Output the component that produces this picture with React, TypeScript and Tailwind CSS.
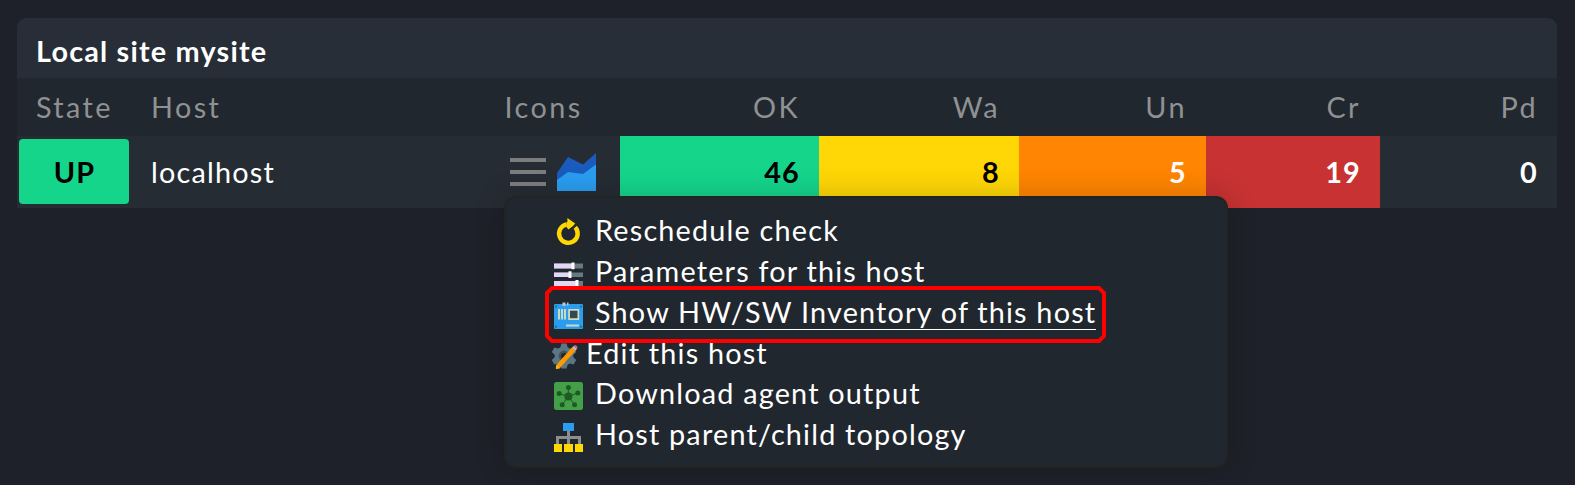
import React from "react";

type IconProps = { className?: string };

function MenuIcon() {
  return (
    <svg width="36" height="28" viewBox="0 0 36 28" className="block" fill="#7b7d7f">
      <rect x="0" y="0" width="36" height="4" />
      <rect x="0" y="12" width="36" height="4" />
      <rect x="0" y="24" width="36" height="4" />
    </svg>
  );
}

function GraphIcon() {
  return (
    <svg width="39" height="38" viewBox="0 0 39 38" className="block">
      <path d="M0 20L11 4L26 11.5L39 0V20L26 30H0Z" fill="#1a5bbd" />
      <path d="M0 27L11 19L26 21L39 11.5V38H0Z" fill="#2a9df0" />
    </svg>
  );
}

function RescheduleIcon({ className }: IconProps) {
  return (
    <svg width="30" height="30" viewBox="0 0 30 30" className={className}>
      <path d="M22.2 9.2A9.3 9.3 0 1 1 13.6 6.4" fill="none" stroke="#ffd703" strokeWidth="4.4" />
      <path d="M14.4 0L22.2 5.4L20 8L15.4 11.4L13.4 9V4.2L14.4 3.8Z" fill="#ffd703" />
    </svg>
  );
}

function ParametersIcon({ className }: IconProps) {
  return (
    <svg width="30" height="30" viewBox="0 0 30 30" className={className}>
      <path d="M1 4.5H30V9.5H1ZM1 13.5H30V18H1ZM1 22H30V27H1Z" fill="#677983" />
      <path d="M1 4.5H19V9.5H1ZM1 13.5H16V18H1ZM1 22H23V27H1Z" fill="#e3d7f5" />
      <path d="M18.5 3.5H21.5V10.3H18.5ZM15.5 12.3H18.5V19H15.5ZM22.5 21H25.5V28H22.5Z" fill="#fff" />
    </svg>
  );
}

function InventoryIcon({ className }: IconProps) {
  return (
    <svg width="30" height="30" viewBox="0 0 30 30" className={className}>
      <rect x="1" y="4" width="29" height="25" rx="1" fill="#2a9df0" />
      <path d="M9.5 2.5H12.5V6H9.5ZM14 2.5H15.5V5.5H14Z" fill="#b9c6cb" />
      <path d="M5 9H7V19.5H5ZM8 9H10V19.5H8ZM11 9H13V19.5H11Z" fill="#c9dac0" />
      <rect x="15.2" y="9" width="11" height="11" fill="#cfdabf" />
      <rect x="17" y="10.7" width="7.5" height="7.5" fill="#37474f" />
      <rect x="13" y="24.5" width="13" height="2" fill="#c9dac0" />
      <path d="M2 5.5h2v2H2zM27 5.5h2v2h-2zM2 25.8h2v2H2zM27 25.8h2v2h-2z" fill="#17806f" />
    </svg>
  );
}

function EditIcon({ className }: IconProps) {
  return (
    <svg width="30" height="30" viewBox="0 0 30 30" className={className}>
      <g fill="#5b7685" transform="translate(13 15)">
        <circle r="9.4" />
        <g transform="rotate(0)">
          <path d="M-3.8-8L-2.6-12.6H2.6L3.8-8ZM-3.8 8L-2.6 12.6H2.6L3.8 8Z" />
        </g>
        <g transform="rotate(60)">
          <path d="M-3.8-8L-2.6-12.6H2.6L3.8-8ZM-3.8 8L-2.6 12.6H2.6L3.8 8Z" />
        </g>
        <g transform="rotate(120)">
          <path d="M-3.8-8L-2.6-12.6H2.6L3.8-8ZM-3.8 8L-2.6 12.6H2.6L3.8 8Z" />
        </g>
        <circle r="5.4" fill="#40525d" />
        <circle r="3" fill="#21272e" />
      </g>
      <path d="M5.2 24L21 6.6L24.4 9.8L8.8 27.2L5.2 28Z" fill="#fe9803" />
      <path d="M5.2 24L8.8 27.2L4.8 28Z" fill="#e0c12c" />
      <path d="M21 6.6L22.6 4.9L26 8L24.4 9.8Z" fill="#b8c2c8" />
      <path d="M22.6 4.9C24 3 27.8 5.6 26 8Z" fill="#ee6a72" />
    </svg>
  );
}

function AgentIcon({ className }: IconProps) {
  return (
    <svg width="30" height="30" viewBox="0 0 30 30" className={className}>
      <rect x="1" y="1" width="29" height="28" rx="2.5" fill="#44a048" />
      <g stroke="#1f5a24" strokeWidth="1">
        <path d="M15.3 15.5V6.5M15.3 15.5L6.3 12.5M15.3 15.5L24.7 12M15.3 15.5L9 23.8M15.3 15.5L21.8 23.8" />
      </g>
      <g fill="#1f5a24">
        <circle cx="15.4" cy="15.6" r="4" />
        <circle cx="15.4" cy="6.4" r="2.5" />
        <circle cx="6.2" cy="12.6" r="2.5" />
        <circle cx="24.8" cy="12" r="2.5" />
        <circle cx="9.2" cy="23.8" r="2.5" />
        <circle cx="21.6" cy="23.8" r="2.5" />
      </g>
    </svg>
  );
}

function TopologyIcon({ className }: IconProps) {
  return (
    <svg width="30" height="30" viewBox="0 0 30 30" className={className}>
      <path d="M4.5 22V15.5H26.5V22M15.5 8V22" fill="none" stroke="#8b8d8f" strokeWidth="3" />
      <rect x="10" y="1" width="11" height="8" fill="#2a9df0" />
      <path d="M1 22H9V30H1ZM11 22H20V30H11ZM22 22H30V30H22Z" fill="#ffd703" />
    </svg>
  );
}

const counts = [
  { label: "OK", value: 46, width: "w-[199px]", colors: "bg-[#15d58b] text-black" },
  { label: "Wa", value: 8, width: "w-[200px]", colors: "bg-[#ffd706] text-black" },
  { label: "Un", value: 5, width: "w-[187px]", colors: "bg-[#ff8502] text-white" },
  { label: "Cr", value: 19, width: "w-[174px]", colors: "bg-[#c83232] text-white" },
  { label: "Pd", value: 0, width: "w-[177px]", colors: "text-white" },
];

const menuItems = [
  { label: "Reschedule check", Icon: RescheduleIcon },
  { label: "Parameters for this host", Icon: ParametersIcon },
  { label: "Show HW/SW Inventory of this host", Icon: InventoryIcon, active: true },
  { label: "Edit this host", Icon: EditIcon, tight: true },
  { label: "Download agent output", Icon: AgentIcon },
  { label: "Host parent/child topology", Icon: TopologyIcon },
];

function HostMenu() {
  return (
    <div className="absolute left-[504px] top-[196px] h-[272px] w-[724px] rounded-[12px] border-2 border-[#222423] bg-[#21272e] pl-[47px] pt-[11.6px] shadow-[0_0_30px_rgba(0,0,0,0.2)]">
      {menuItems.map(({ label, Icon, active, tight }) => (
        <div
          key={label}
          className={
            tight
              ? "flex h-[40.8px] items-center gap-[5px] -ml-[2px]"
              : "flex h-[40.8px] items-center gap-[12px]"
          }
        >
          <Icon className="mt-[6.6px] block shrink-0" />
          <span
            className={
              active
                ? "-mb-[3px] border-b border-white leading-[33px]"
                : tight
                  ? "pt-[1px] leading-[36px]"
                  : "leading-[36px]"
            }
          >
            {label}
          </span>
        </div>
      ))}
      <svg
        width="561"
        height="57"
        viewBox="0 0 561 57"
        className="pointer-events-none absolute left-[39px] top-[88px]"
      >
        <path
          d="M7 2H554L559 7V50L554 55H7L2 50V7Z"
          fill="none"
          stroke="#fe0000"
          strokeWidth="4"
        />
      </svg>
    </div>
  );
}

export default function App() {
  return (
    <div className="relative h-[485px] w-[1575px] overflow-hidden whitespace-nowrap bg-[#1e2129] pl-[17px] pt-[18px] font-['Lato',sans-serif] text-[28.8px] tracking-[1.2px] text-white">
      <div className="w-[1540px] overflow-hidden rounded-t-[9px]">
        <div className="flex h-[60px] items-center bg-[#272e37] pl-[19px] pt-[8px] font-bold">
          Local site mysite
        </div>
        <div className="flex h-[58px] items-center bg-[#21272e] pt-[2px] tracking-[2.4px] text-[#8f9193]">
          <div className="w-[134px] pl-[19px]">State</div>
          <div className="w-[353.6px]">Host</div>
          <div className="w-[115.4px]">Icons</div>
          {counts.map((c) => (
            <div key={c.label} className={`${c.width} pr-[19px] text-right`}>
              {c.label}
            </div>
          ))}
        </div>
        <div className="flex h-[72px] items-stretch bg-[#262c34]">
          <div className="w-[134px] pl-[2px] pt-[3px]">
            <div className="flex h-[65px] w-[110px] items-center justify-center rounded-[4px] bg-[#15d58b] pl-[1px] pt-[2px] font-bold text-black">
              UP
            </div>
          </div>
          <div className="flex w-[359px] items-center pt-[2px]">localhost</div>
          <div className="flex w-[110px] items-start gap-[11px]">
            <div className="pt-[22px]">
              <MenuIcon />
            </div>
            <div className="pt-[17px]">
              <GraphIcon />
            </div>
          </div>
          {counts.map((c) => (
            <div
              key={c.label}
              className={`${c.width} ${c.colors} flex items-center justify-end pr-[19px] pt-[2px] font-bold`}
            >
              {c.value}
            </div>
          ))}
        </div>
      </div>
      <HostMenu />
    </div>
  );
}
